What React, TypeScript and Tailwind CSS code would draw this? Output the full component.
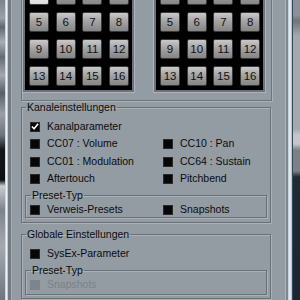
import React from 'react'

const font = { fontFamily: '"Liberation Sans", Arial, sans-serif' }

const Pad = ({ n, lit }: { n: number; lit?: boolean }) => (
  <div
    className={`w-[20px] h-[20px] rounded-[2px] border border-[#3a3a3a] flex items-center justify-center pt-[2px] text-[11.5px] text-[#111] ${
      lit
        ? 'bg-[linear-gradient(to_bottom,#ffffff,#dcdcdc)]'
        : 'bg-[linear-gradient(to_bottom,#c9c9c9_0%,#a4a4a4_45%,#858585_100%)]'
    }`}
  >
    {n}
  </div>
)

const PadGrid = ({ lit }: { lit?: boolean }) => (
  <div className="self-start bg-black pl-[4px] pr-[3px] pt-[4px] pb-[4px] shadow-[0_0_0_2px_#6b7279,0_0_0_3px_#adb3b9]">
    <div className="grid grid-cols-[repeat(4,20px)] gap-x-[6.7px] gap-y-[7px]">
      {Array.from({ length: 16 }, (_, i) => (
        <Pad key={i} n={i + 1} lit={lit && i === 0} />
      ))}
    </div>
  </div>
)

const Check = ({ label, checked, disabled }: { label: string; checked?: boolean; disabled?: boolean }) => (
  <div className="flex items-center gap-[7px] h-full">
    <div
      className={`w-[10px] h-[10px] flex items-center justify-center ${
        disabled ? 'bg-[#7d848b]' : 'bg-[#070707] border border-[#2a2a2a]'
      }`}
    >
      {checked && (
        <svg width="9" height="9" viewBox="0 0 9 9">
          <path d="M1 4.5 L3.5 7 L8 1.5" stroke="#fff" strokeWidth="1.8" fill="none" />
        </svg>
      )}
    </div>
    <span className={disabled ? 'text-[#7b8289]' : 'text-[#0c0c0c]'}>{label}</span>
  </div>
)

const etched = 'border border-[#697077] shadow-[inset_1px_1px_0_#abb1b7,1px_1px_0_#abb1b7]'

export default function App() {
  return (
    <div className="w-[300px] h-[300px] overflow-hidden flex text-[10.5px]" style={font}>
      {/* desktop behind the window */}
      <div className="w-[5px] bg-[linear-gradient(to_bottom,#7c838a_0%,#9aa1a8_6%,#5f666d_9%,#a8aeb4_14%,#646b72_19%,#a2a8ae_25%,#586067_31%,#9aa0a6_38%,#6d747b_45%,#12161a_50%,#0c0f12_60%,#c7ccd1_62%,#7d848b_70%,#a4aab0_82%,#6f767d_100%)]" />
      <div className="w-[3px] bg-[linear-gradient(to_right,#b9c3cc,#eef3f8,#aab4be)]" />
      <div className="w-[3px] bg-[#737a81]" />
      <div className="w-[1px] bg-[#a7adb3]" />

      {/* panel */}
      <div className="w-[273px] bg-[#939ba3] pl-[9px] pr-[13px] flex flex-col">
        {/* pad section */}
        <div className="-mt-[20px] h-[121px] shrink-0 border-x border-b border-[#6d747b] shadow-[inset_1px_0_0_#abb1b7,1px_1px_0_#abb1b7] flex pl-[3px] pt-[1px]">
          <PadGrid lit />
          <div className="w-[24px]" />
          <PadGrid />
        </div>

        {/* Kanaleinstellungen */}
        <fieldset className={`mt-[0px] mr-[1px] ${etched} pb-[4px]`}>
          <legend className="ml-[4px] px-[1px] leading-[13px] text-[#0c0c0c]">Kanaleinstellungen</legend>
          <div className="pt-[4px] pl-[8px] grid grid-cols-[133px_1fr] auto-rows-[17.5px]">
            <Check label="Kanalparameter" checked />
            <div />
            <Check label="CC07 : Volume" />
            <Check label="CC10 : Pan" />
            <Check label="CC01 : Modulation" />
            <Check label="CC64 : Sustain" />
            <Check label="Aftertouch" />
            <Check label="Pitchbend" />
          </div>
          <fieldset className={`mt-[1px] ml-[3px] mr-[3px] ${etched}`}>
            <legend className="ml-[5px] px-[1px] leading-[13px] text-[#0c0c0c]">Preset-Typ</legend>
            <div className="pl-[4px] grid grid-cols-[133px_1fr] h-[15px]">
              <Check label="Verweis-Presets" />
              <Check label="Snapshots" />
            </div>
          </fieldset>
        </fieldset>

        {/* Globale Einstellungen */}
        <fieldset className={`mt-[5px] mr-[1px] ${etched} pb-[3px]`}>
          <legend className="ml-[4px] px-[1px] leading-[13px] text-[#0c0c0c]">Globale Einstellungen</legend>
          <div className="pt-[4px] pl-[8px] h-[21.5px]">
            <Check label="SysEx-Parameter" />
          </div>
          <fieldset className={`mt-[1px] ml-[3px] mr-[3px] ${etched}`}>
            <legend className="ml-[5px] px-[1px] leading-[13px] text-[#0c0c0c]">Preset-Typ</legend>
            <div className="pl-[4px] h-[17px]">
              <Check label="Snapshots" disabled />
            </div>
          </fieldset>
        </fieldset>
      </div>

      {/* window frame right */}
      <div className="w-[1px] bg-[#aeb4ba]" />
      <div className="w-[2px] bg-[#7f868d]" />
      <div className="w-[4px] bg-[linear-gradient(to_right,#b8c6d3,#eef4fa,#a9b7c4)]" />
      <div className="w-[1px] bg-[#3d4650]" />
      <div className="flex-1 bg-[linear-gradient(to_bottom,#8b9199_0%,#8b9199_5%,#6e757c_7%,#a3a9af_12%,#a3a9af_43%,#c3c7cb_45%,#c3c7cb_48%,#7a8188_50%,#7a8188_57%,#1f2a36_59%,#1b2633_100%)]" />
    </div>
  )
}
